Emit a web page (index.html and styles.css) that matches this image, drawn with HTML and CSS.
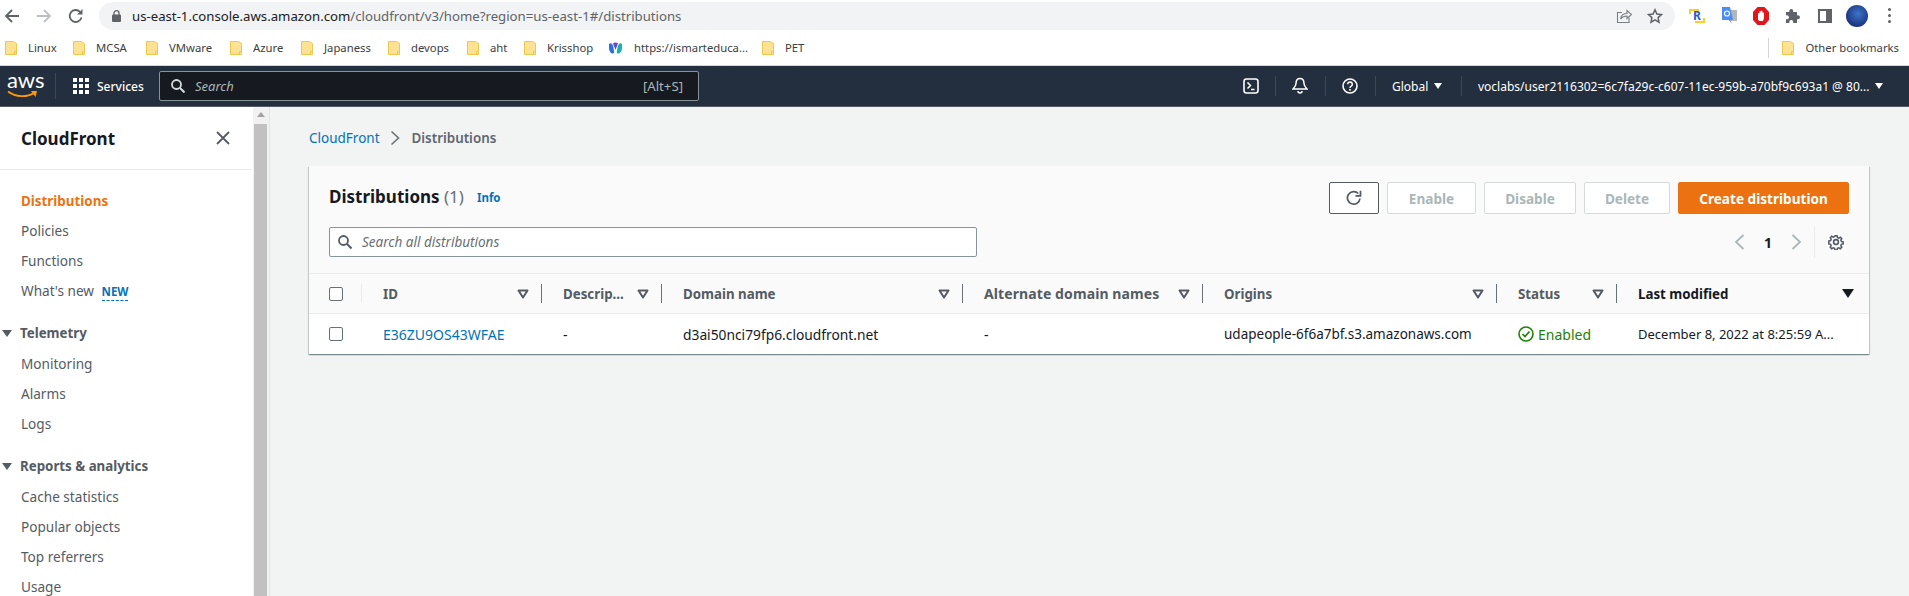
FILE: index.html
```html
<!DOCTYPE html>
<html lang="en">

<head>
    <meta charset="utf-8">
    <title>Distributions | CloudFront</title>
    <link rel="stylesheet" href="styles.css">
</head>

<body>
    <svg class="defs" width="0" height="0">
        <symbol id="folder" viewBox="0 0 12 14">
            <path d="M.5.5h8l3 2v11H.5z" fill="#fde293" stroke="#f1c84b"/>
            <path d="M9.5 13.5v-3h2" fill="none" stroke="#f1c84b"/>
        </symbol>
        <symbol id="filter" viewBox="0 0 12 10">
            <path d="M1.5 1.5h9L6 8.5z" fill="none" stroke="#545b64" stroke-width="2" stroke-linejoin="round"/>
        </symbol>
    </svg>

    <!-- browser chrome -->
    <div class="toolbar">
        <svg class="tb-back" width="16" height="16" viewBox="0 0 16 16"><path d="M15 8H2M8 2 2 8l6 6" fill="none" stroke="#5f6368" stroke-width="1.8"/></svg>
        <svg class="tb-forward" width="16" height="16" viewBox="0 0 16 16"><path d="M1 8h13M8 2l6 6-6 6" fill="none" stroke="#bcbfc3" stroke-width="1.8"/></svg>
        <svg class="tb-reload" width="16" height="16" viewBox="0 0 16 16"><path d="M13.5 9.5A6 6 0 1 1 12 3.8" fill="none" stroke="#5f6368" stroke-width="1.8"/><path d="M14.5 1v5.5H9z" fill="#5f6368"/></svg>
        <div class="omnibox">
            <svg class="lock" width="9" height="12" viewBox="0 0 9 12"><path d="M2 5V3.200a2.500 2.500 0 0 1 5 0V5" fill="none" stroke="#5f6368" stroke-width="1.300"/><rect y="4.500" width="9" height="7.500" rx="1" fill="#5f6368"/></svg>
            <span class="url"><span class="url-host">us-east-1.console.aws.amazon.com</span>/cloudfront/v3/home?region=us-east-1#/distributions</span>
            <svg class="share" width="16" height="16" viewBox="0 0 16 16"><path d="M13 9.500V14.500H1.500V4.500H6" fill="none" stroke="#7a7e83" stroke-width="1.100"/><path d="M4.500 11c.5-3.500 3-5.500 6.500-5.500V2.500l4.500 4-4.500 4V8c-3 0-5 1-6.500 3z" fill="#f1f3f4" stroke="#7a7e83" stroke-width="1.100"/></svg>
            <svg class="star" width="16" height="16" viewBox="0 0 16 16"><path d="m8 1.800 1.900 4.200 4.600.5-3.400 3.100.9 4.600L8 11.900l-4 2.300.9-4.600-3.400-3.100L6.100 6z" fill="none" stroke="#5f6368" stroke-width="1.500"/></svg>
        </div>
        <div class="ext-icons">
            <span class="ext-r">R<svg class="ext-r-arrows" width="16" height="16" viewBox="0 0 16 16"><path d="M1 6V2h9M15 10v4H6" fill="none" stroke="#fbd02e" stroke-width="2"/></svg></span>
            <svg width="17" height="19" viewBox="0 0 17 19"><path d="M7 4h9v11H9z" fill="#b4b6ba"/><path d="M1 1h8l3 13H1z" fill="#4a8df6"/><path d="m9 14 2 4-3-4z" fill="#3367d6"/><circle cx="6" cy="7.500" r="2.500" fill="none" stroke="#fff" stroke-width="1.200"/></svg>
            <svg width="18" height="20" viewBox="0 0 18 20"><path d="M5.500 1h7L17 6v8l-4.500 5h-7L1 14V6z" fill="#e3161c"/><path d="M6 14V7.500a.8.8 0 0 1 1.500 0V10V5.500a.8.8 0 0 1 1.500 0V10V5a.8.8 0 0 1 1.500 0v5.500V7a.8.8 0 0 1 1.500 0v5l-1 3H7.500z" fill="#fff"/></svg>
            <svg width="16" height="16" viewBox="0 0 16 16"><path d="M1 4h3.500a2 2 0 1 1 3.500 0h4v3.500a2 2 0 1 1 0 3.500V15H8a2 2 0 1 0-3.500 0H1v-4a2 2 0 1 0 0-3.500z" fill="#5f6368"/></svg>
            <span class="ext-panel"></span>
            <span class="ext-avatar"></span>
            <span class="ext-menu"><i></i><i></i><i></i></span>
        </div>
    </div>

    <div class="bookmarks">
        <span class="bm"><svg class="bm-icon"><use href="#folder"/></svg>Linux</span>
        <span class="bm"><svg class="bm-icon"><use href="#folder"/></svg>MCSA</span>
        <span class="bm"><svg class="bm-icon"><use href="#folder"/></svg>VMware</span>
        <span class="bm"><svg class="bm-icon"><use href="#folder"/></svg>Azure</span>
        <span class="bm"><svg class="bm-icon"><use href="#folder"/></svg>Japaness</span>
        <span class="bm"><svg class="bm-icon"><use href="#folder"/></svg>devops</span>
        <span class="bm"><svg class="bm-icon"><use href="#folder"/></svg>aht</span>
        <span class="bm"><svg class="bm-icon"><use href="#folder"/></svg>Krisshop</span>
        <span class="bm"><svg class="bm-site" width="15" height="14" viewBox="0 0 15 14"><path d="M1 3c2-2 4 0 4.500 4S7 12 5 12.500 1 10 1 7z" fill="#2b6fe6"/><path d="M14 3c-2-2-4 0-4.500 4S8 12 10 12.500 14 10 14 7z" fill="#12b5a4"/><path d="M5 2.500c1.500-1.500 3.500-1.500 5 0L7.500 9z" fill="#6f42d8"/></svg>https://ismarteduca...</span>
        <span class="bm"><svg class="bm-icon"><use href="#folder"/></svg>PET</span>
        <span class="bm bm-other"><svg class="bm-icon"><use href="#folder"/></svg>Other bookmarks</span>
    </div>

    <!-- aws console nav -->
    <nav class="topnav">
        <div class="logo">
            <span class="logo-text">aws</span>
            <svg class="logo-smile" width="31" height="9" viewBox="0 0 31 9"><path d="M1 1.500c8 6 19 6 26 1.500" fill="none" stroke="#ff9900" stroke-width="1.800"/><path d="M24 1h6l-1.500 6z" fill="#ff9900"/></svg>
        </div>
        <div class="services">
            <span class="grid-icon"><i></i><i></i><i></i><i></i><i></i><i></i><i></i><i></i><i></i></span>
            <span>Services</span>
        </div>
        <div class="nav-search">
            <svg width="14" height="14" viewBox="0 0 14 14"><circle cx="5.500" cy="5.500" r="4.500" fill="none" stroke="#d5dbdb" stroke-width="1.800"/><path d="m9 9 4.500 4.500" stroke="#d5dbdb" stroke-width="2"/></svg>
            <span class="nav-search-text">Search</span>
            <span class="nav-search-key">[Alt+S]</span>
        </div>
        <div class="nav-right">
            <div class="nav-item nav-terminal">
                <svg width="16" height="16" viewBox="0 0 16 16"><rect x="1" y="1" width="14" height="14" rx="2.500" fill="none" stroke="#fff" stroke-width="1.600"/><path d="m4.500 4.500 3 3-3 3M8 11.500h3.500" fill="none" stroke="#fff" stroke-width="1.500"/></svg>
            </div>
            <div class="nav-item nav-icon">
                <svg width="16" height="18" viewBox="0 0 16 18"><path d="M8 1.500c3 0 4 2.500 4 5 0 2.500 1.500 4 3 5.500H1c1.500-1.500 3-3 3-5.500s1-5 4-5z" fill="none" stroke="#fff" stroke-width="1.500"/><path d="M6 14a2 2 0 0 0 4 0" fill="none" stroke="#fff" stroke-width="1.500"/></svg>
            </div>
            <div class="nav-item nav-icon">
                <svg width="16" height="16" viewBox="0 0 16 16"><circle cx="8" cy="8" r="7" fill="none" stroke="#fff" stroke-width="1.600"/><path d="M5.700 6.200a2.300 2.300 0 1 1 3.500 2c-.8.500-1.200.9-1.200 1.800" fill="none" stroke="#fff" stroke-width="1.500"/><rect x="7.200" y="11" width="1.600" height="1.700" fill="#fff"/></svg>
            </div>
            <div class="nav-item nav-global">Global<span class="nav-caret"></span></div>
            <div class="nav-item nav-user">voclabs/user2116302=6c7fa29c-c607-11ec-959b-a70bf9c693a1 @ 80...<span class="nav-caret"></span></div>
        </div>
    </nav>

    <div class="layout">
        <aside class="sidebar">
            <div class="side-head">
                <span class="side-title">CloudFront</span>
                <svg width="14" height="14" viewBox="0 0 14 14"><path d="m1 1 12 12M13 1 1 13" stroke="#545b64" stroke-width="1.800"/></svg>
            </div>
            <ul class="side-list">
                <li class="side-link active">Distributions</li>
                <li class="side-link">Policies</li>
                <li class="side-link">Functions</li>
                <li class="side-link">What's new <span class="new-tag">NEW</span></li>
            </ul>
            <div class="side-group"><span class="tri"></span>Telemetry</div>
            <ul class="side-list side-sub">
                <li class="side-link">Monitoring</li>
                <li class="side-link">Alarms</li>
                <li class="side-link">Logs</li>
            </ul>
            <div class="side-group"><span class="tri"></span>Reports &amp; analytics</div>
            <ul class="side-list side-sub">
                <li class="side-link">Cache statistics</li>
                <li class="side-link">Popular objects</li>
                <li class="side-link">Top referrers</li>
                <li class="side-link">Usage</li>
            </ul>
        </aside>
        <div class="scrollbar">
            <span class="scroll-up"></span>
            <div class="scroll-thumb"></div>
        </div>

        <main class="content">
            <div class="breadcrumb">
                <a class="crumb-link">CloudFront</a>
                <svg width="10" height="16" viewBox="0 0 10 16"><path d="m1.500 1.500 7 6.500-7 6.500" fill="none" stroke="#687078" stroke-width="1.600"/></svg>
                <span class="crumb-current">Distributions</span>
            </div>

            <section class="card">
                <div class="card-head">
                    <div class="card-left">
                        <h1 class="card-title">Distributions <span class="count">(1)</span><a class="info">Info</a></h1>
                        <div class="search-box">
                            <svg width="14" height="14" viewBox="0 0 14 14"><circle cx="5.500" cy="5.500" r="4.500" fill="none" stroke="#545b64" stroke-width="1.800"/><path d="m9 9 4.500 4.500" stroke="#545b64" stroke-width="2"/></svg>
                            <span>Search all distributions</span>
                        </div>
                    </div>
                    <div class="card-right">
                        <div class="actions">
                            <button class="btn btn-refresh" type="button">
                                <svg width="16" height="16" viewBox="0 0 16 16"><path d="M14 8.500A6.300 6.300 0 1 1 12.300 3.500" fill="none" stroke="#545b64" stroke-width="1.700"/><path d="M14.500 .8v5h-5" fill="none" stroke="#545b64" stroke-width="1.700"/></svg>
                            </button>
                            <button class="btn btn-enable" type="button">Enable</button>
                            <button class="btn btn-disable" type="button">Disable</button>
                            <button class="btn btn-delete" type="button">Delete</button>
                            <button class="btn btn-primary" type="button">Create distribution</button>
                        </div>
                        <div class="pager">
                            <svg width="11" height="16" viewBox="0 0 11 16"><path d="M9.500 1 2 8l7.500 7" fill="none" stroke="#aab7b8" stroke-width="1.800"/></svg>
                            <span class="page-num">1</span>
                            <svg width="11" height="16" viewBox="0 0 11 16"><path d="m1.500 1 7.500 7-7.500 7" fill="none" stroke="#aab7b8" stroke-width="1.800"/></svg>
                            <span class="pager-sep"></span>
                            <svg width="16" height="16" viewBox="0 0 16 16"><path d="M6.800 1h2.400l.4 1.900 1.500.7 1.700-1 1.600 1.700-1 1.600.6 1.500 2 .5v2.200l-2 .5-.6 1.500 1 1.600-1.600 1.700-1.700-1-1.500.7-.4 1.900H6.800l-.4-1.900-1.500-.7-1.700 1-1.600-1.700 1-1.600-.6-1.500-2-.5V6.900l2-.5.6-1.500-1-1.600 1.600-1.700 1.700 1 1.500-.7z" transform="translate(.8 .8) scale(.9)" fill="none" stroke="#545b64" stroke-width="1.700"/><circle cx="8" cy="8" r="2.400" fill="none" stroke="#545b64" stroke-width="1.600"/></svg>
                        </div>
                    </div>
                </div>

                <div class="table-row table-head">
                    <div class="cell cell-check"><span class="checkbox"></span></div>
                    <div class="cell"><span class="th">ID</span><svg class="filter"><use href="#filter"/></svg></div>
                    <div class="cell"><span class="th">Descrip...</span><svg class="filter"><use href="#filter"/></svg></div>
                    <div class="cell"><span class="th">Domain name</span><svg class="filter"><use href="#filter"/></svg></div>
                    <div class="cell"><span class="th th-wide">Alternate domain names</span><svg class="filter"><use href="#filter"/></svg></div>
                    <div class="cell"><span class="th">Origins</span><svg class="filter"><use href="#filter"/></svg></div>
                    <div class="cell"><span class="th">Status</span><svg class="filter"><use href="#filter"/></svg></div>
                    <div class="cell cell-last"><span class="th th-sorted">Last modified</span><span class="sort-tri"></span></div>
                </div>
                <div class="table-row table-body">
                    <div class="cell cell-check"><span class="checkbox"></span></div>
                    <div class="cell"><a class="id-link">E36ZU9OS43WFAE</a></div>
                    <div class="cell">-</div>
                    <div class="cell cell-domain">d3ai50nci79fp6.cloudfront.net</div>
                    <div class="cell">-</div>
                    <div class="cell cell-origin">udapeople-6f6a7bf.s3.amazonaws.com</div>
                    <div class="cell status">
                        <svg width="16" height="16" viewBox="0 0 16 16"><circle cx="8" cy="8" r="7" fill="none" stroke="#1d8102" stroke-width="1.600"/><path d="m4.500 8 2.500 2.500 4.500-5" fill="none" stroke="#1d8102" stroke-width="1.700"/></svg>
                        <span>Enabled</span>
                    </div>
                    <div class="cell cell-last cell-date">December 8, 2022 at 8:25:59 A...</div>
                </div>
            </section>
        </main>
    </div>
</body>

</html>
```

FILE: styles.css
```css
html, body {
    height: 100%;
}

body {
    margin: 0;
    height: 596px;
    overflow: hidden;
    background-color: #ffffff;
    font-family: "Noto Sans", sans-serif;
    font-size: 14px;
    color: #16191f;
}

.defs {
    display: block;
    height: 0;
}

a {
    text-decoration: none;
}

/* browser chrome */
.toolbar {
    height: 30px;
    display: flex;
    align-items: center;
    padding-left: 4px;
    box-sizing: border-box;
    padding-top: 1px;
}

.tb-forward {
    margin-left: 16px;
}

.tb-reload {
    margin-left: 16px;
}

.omnibox {
    margin-left: 15px;
    width: 1576px;
    height: 28px;
    border-radius: 14px;
    background-color: #f1f3f4;
    display: flex;
    align-items: center;
    padding-left: 13px;
    padding-right: 12px;
    box-sizing: border-box;
}

.lock {
    margin-right: 11px;
}

.url {
    font-size: 13.2px;
    color: #5f6368;
    flex: 1;
}

.url-host {
    color: #202124;
}

.share {
    margin-right: 15px;
}

.ext-icons {
    display: grid;
    grid-template-columns: repeat(7, 32px);
    justify-items: center;
    align-items: center;
    margin-left: 6px;
}

.ext-r {
    position: relative;
    width: 16px;
    height: 16px;
    font-size: 12px;
    font-weight: 700;
    line-height: 16px;
    text-align: center;
    color: #2a5bd7;
}

.ext-r-arrows {
    position: absolute;
    left: 0;
    top: 0;
}

.ext-panel {
    width: 14px;
    height: 14px;
    box-sizing: border-box;
    border: 2px solid #5f6368;
    border-right-width: 6px;
}

.ext-avatar {
    width: 22px;
    height: 22px;
    border-radius: 50%;
    background: radial-gradient(circle at 55% 40%, #3f74c9, #17307a 75%);
}

.ext-menu {
    width: 3px;
    display: flex;
    flex-direction: column;
    gap: 3px;
}

.ext-menu i {
    width: 3px;
    height: 3px;
    border-radius: 50%;
    background-color: #5f6368;
}

.bookmarks {
    height: 35px;
    display: grid;
    grid-template-columns: 68px 73px 84px 71px 87px 79px 57px 84px 154px 1fr auto;
    align-items: center;
    padding-left: 5px;
    border-bottom: 1px solid #d5d7da;
    font-size: 11.3px;
    color: #3c4043;
}

.bm {
    display: flex;
    align-items: center;
    gap: 11px;
}

.bm-icon {
    width: 12px;
    height: 14px;
}

.bm-other {
    margin-right: 10px;
    padding-left: 13px;
    border-left: 1px solid #d5d7da;
    height: 20px;
}

/* aws nav */
.topnav {
    height: 40px;
    background-color: #232f3e;
    border-bottom: 1px solid #545b64;
    display: flex;
    align-items: center;
    color: #ffffff;
    font-size: 12px;
}

.logo {
    width: 48px;
    margin-left: 7px;
    height: 26px;
    position: relative;
    border-right: 1px solid #414750;
}

.logo-text {
    position: absolute;
    left: 0;
    top: -6px;
    font-family: "Lato", sans-serif;
    font-size: 22px;
    line-height: 26px;
}

.logo-smile {
    position: absolute;
    left: 0;
    top: 17px;
}

.services {
    display: flex;
    align-items: center;
    gap: 8px;
    margin-left: 17px;
    font-weight: 500;
    width: 86px;
}

.grid-icon {
    display: grid;
    grid-template-columns: repeat(3, 4px);
    gap: 2px;
}

.grid-icon i {
    width: 4px;
    height: 4px;
    background-color: #ffffff;
}

.nav-search {
    width: 540px;
    height: 30px;
    box-sizing: border-box;
    background-color: #16191f;
    border: 1px solid #879596;
    border-radius: 2px;
    display: flex;
    align-items: center;
    padding-left: 11px;
    padding-right: 15px;
    color: #aab7b8;
    font-size: 13px;
}

.nav-search-text {
    margin-left: 10px;
    font-style: italic;
    flex: 1;
}

.nav-search-key {
    font-size: 13.2px;
}

.nav-right {
    margin-left: auto;
    display: flex;
    align-items: center;
    height: 20px;
}

.nav-item {
    display: flex;
    align-items: center;
    height: 20px;
    box-sizing: border-box;
}

.nav-terminal {
    width: 32px;
}

.nav-icon {
    width: 50px;
    padding-left: 16px;
    border-left: 1px solid #414750;
}

.nav-global {
    width: 86px;
    padding-left: 16px;
    border-left: 1px solid #414750;
}

.nav-user {
    width: 448px;
    padding-left: 16px;
    border-left: 1px solid #414750;
}

.nav-caret {
    margin-left: 6px;
    width: 0;
    height: 0;
    border-left: 4.5px solid transparent;
    border-right: 4.5px solid transparent;
    border-top: 6px solid #ffffff;
}

/* page */
.layout {
    display: flex;
    height: 490px;
    overflow: hidden;
}

.sidebar {
    width: 252px;
    flex: none;
    overflow: hidden;
}

.side-head {
    height: 63px;
    box-sizing: border-box;
    display: flex;
    align-items: center;
    justify-content: space-between;
    padding-left: 21px;
    padding-right: 22px;
    border-bottom: 1px solid #eaeded;
}

.side-title {
    font-size: 17px;
    font-weight: 700;
    color: #16191f;
}

.side-list {
    list-style: none;
    margin: 0;
    padding: 16px 0 0 0;
}

.side-sub {
    padding-top: 1px;
}

.side-link {
    height: 30px;
    line-height: 30px;
    padding-left: 21px;
    font-size: 13.6px;
    color: #545b64;
}

.active {
    color: #ec7211;
    font-weight: 700;
    font-size: 13.4px;
}

.new-tag {
    margin-left: 4px;
    font-size: 11.5px;
    font-weight: 700;
    color: #0073bb;
    border-bottom: 1px dashed #0073bb;
    padding-bottom: 1px;
}

.side-group {
    height: 30px;
    display: flex;
    align-items: center;
    gap: 8px;
    padding-left: 2px;
    margin-top: 12px;
    font-size: 13.3px;
    font-weight: 700;
    color: #545b64;
}

.tri {
    width: 0;
    height: 0;
    border-left: 5px solid transparent;
    border-right: 5px solid transparent;
    border-top: 7px solid #545b64;
}

.scrollbar {
    width: 18px;
    flex: none;
    box-sizing: border-box;
    padding-left: 1px;
    background-color: #f1f1f1;
    border-right: 1px solid #e3e5e5;
    border-left: 1px solid #ffffff;
}

.scroll-up {
    display: block;
    width: 0;
    height: 0;
    margin: 5px 0 0 3px;
    border-left: 4px solid transparent;
    border-right: 4px solid transparent;
    border-bottom: 5px solid #a3a3a3;
}

.scroll-thumb {
    width: 13px;
    height: 472px;
    margin-top: 7px;
    background-color: #c1c1c1;
}

.content {
    flex: 1;
    background-color: #f2f3f3;
    padding-left: 39px;
    padding-right: 40px;
}

.breadcrumb {
    height: 59px;
    display: flex;
    align-items: center;
    gap: 10px;
    padding-top: 3px;
    box-sizing: border-box;
}

.crumb-link {
    color: #0073bb;
    font-size: 13.5px;
}

.crumb-current {
    color: #5f6670;
    font-weight: 600;
    font-size: 13.4px;
    margin-left: 2px;
}

.card {
    background-color: #ffffff;
    box-shadow: 0 1px 1px 0 rgba(0, 28, 36, 0.3), 1px 1px 1px 0 rgba(0, 28, 36, 0.15), -1px 1px 1px 0 rgba(0, 28, 36, 0.15);
}

.card-head {
    height: 108px;
    box-sizing: border-box;
    background-color: #fafafa;
    border-bottom: 1px solid #eaeded;
    display: flex;
    justify-content: space-between;
    padding: 15px 20px 0 20px;
}

.card-title {
    margin: 0;
    height: 30px;
    display: flex;
    align-items: center;
    font-size: 17px;
    font-weight: 700;
    white-space: pre;
}

.count {
    font-weight: 400;
    color: #687078;
}

.info {
    margin-left: 13px;
    font-size: 11.5px;
    font-weight: 700;
    color: #0073bb;
    padding-top: 3px;
}

.search-box {
    width: 648px;
    height: 30px;
    margin-top: 16px;
    box-sizing: border-box;
    background-color: #ffffff;
    border: 1px solid #879596;
    border-radius: 2px;
    display: flex;
    align-items: center;
    gap: 10px;
    padding-left: 8px;
    color: #687078;
    font-size: 13.5px;
    font-style: italic;
}

.card-right {
    display: flex;
    flex-direction: column;
    align-items: flex-end;
    padding-top: 1px;
}

.actions {
    display: flex;
    gap: 8px;
}

.btn {
    height: 32px;
    box-sizing: border-box;
    padding: 0;
    background-color: #ffffff;
    border: 1px solid #d5dbdb;
    border-radius: 2px;
    font-family: inherit;
    font-size: 13.6px;
    font-weight: 700;
    color: #aab7b8;
    display: flex;
    align-items: center;
    justify-content: center;
}

.btn-refresh {
    width: 50px;
    border-color: #545b64;
}

.btn-enable {
    width: 89px;
}

.btn-disable {
    width: 92px;
}

.btn-delete {
    width: 86px;
}

.btn-primary {
    width: 171px;
    background-color: #ec7211;
    border-color: #ec7211;
    color: #ffffff;
}

.pager {
    display: flex;
    align-items: center;
    height: 32px;
    margin-top: 12px;
    margin-right: 5px;
}

.page-num {
    width: 46px;
    text-align: center;
    font-size: 14px;
    font-weight: 700;
}

.pager-sep {
    width: 1px;
    height: 32px;
    background-color: #eaeded;
    margin-left: 12px;
    margin-right: 13px;
}

.table-row {
    display: grid;
    grid-template-columns: 53px 180px 120px 301px 240px 294px 120px 252px;
    align-items: center;
}

.table-head {
    height: 39px;
    background-color: #fafafa;
    border-bottom: 1px solid #eaeded;
}

.table-body {
    height: 40px;
    background-color: #ffffff;
}

.cell {
    display: flex;
    align-items: center;
    justify-content: space-between;
    padding-left: 21px;
    padding-right: 12px;
    box-sizing: border-box;
    white-space: nowrap;
}

.table-head .cell {
    height: 19px;
    border-right: 1px solid #687078;
}

.table-head .cell-last {
    border-right: none;
    padding-right: 15px;
}

.table-head .cell-check {
    border-right-color: #eaeded;
}

.cell-check {
    padding-left: 20px;
    padding-right: 0;
}

.cell-domain {
    font-size: 13.8px;
}

.cell-origin {
    font-size: 13.5px;
}

.cell-date {
    font-size: 13px;
}

.status {
    justify-content: flex-start;
    gap: 4px;
    color: #1d8102;
}

.checkbox {
    width: 14px;
    height: 14px;
    box-sizing: border-box;
    background-color: #ffffff;
    border: 1px solid #687078;
    border-radius: 2px;
}

.th {
    font-size: 13.3px;
    font-weight: 700;
    color: #545b64;
}

.th-wide {
    font-size: 14px;
    letter-spacing: 0.1px;
}

.th-sorted {
    color: #16191f;
}

.filter {
    width: 12px;
    height: 10px;
    flex: none;
}

.sort-tri {
    width: 0;
    height: 0;
    border-left: 6px solid transparent;
    border-right: 6px solid transparent;
    border-top: 9px solid #16191f;
}

.id-link {
    color: #0073bb;
}
```
